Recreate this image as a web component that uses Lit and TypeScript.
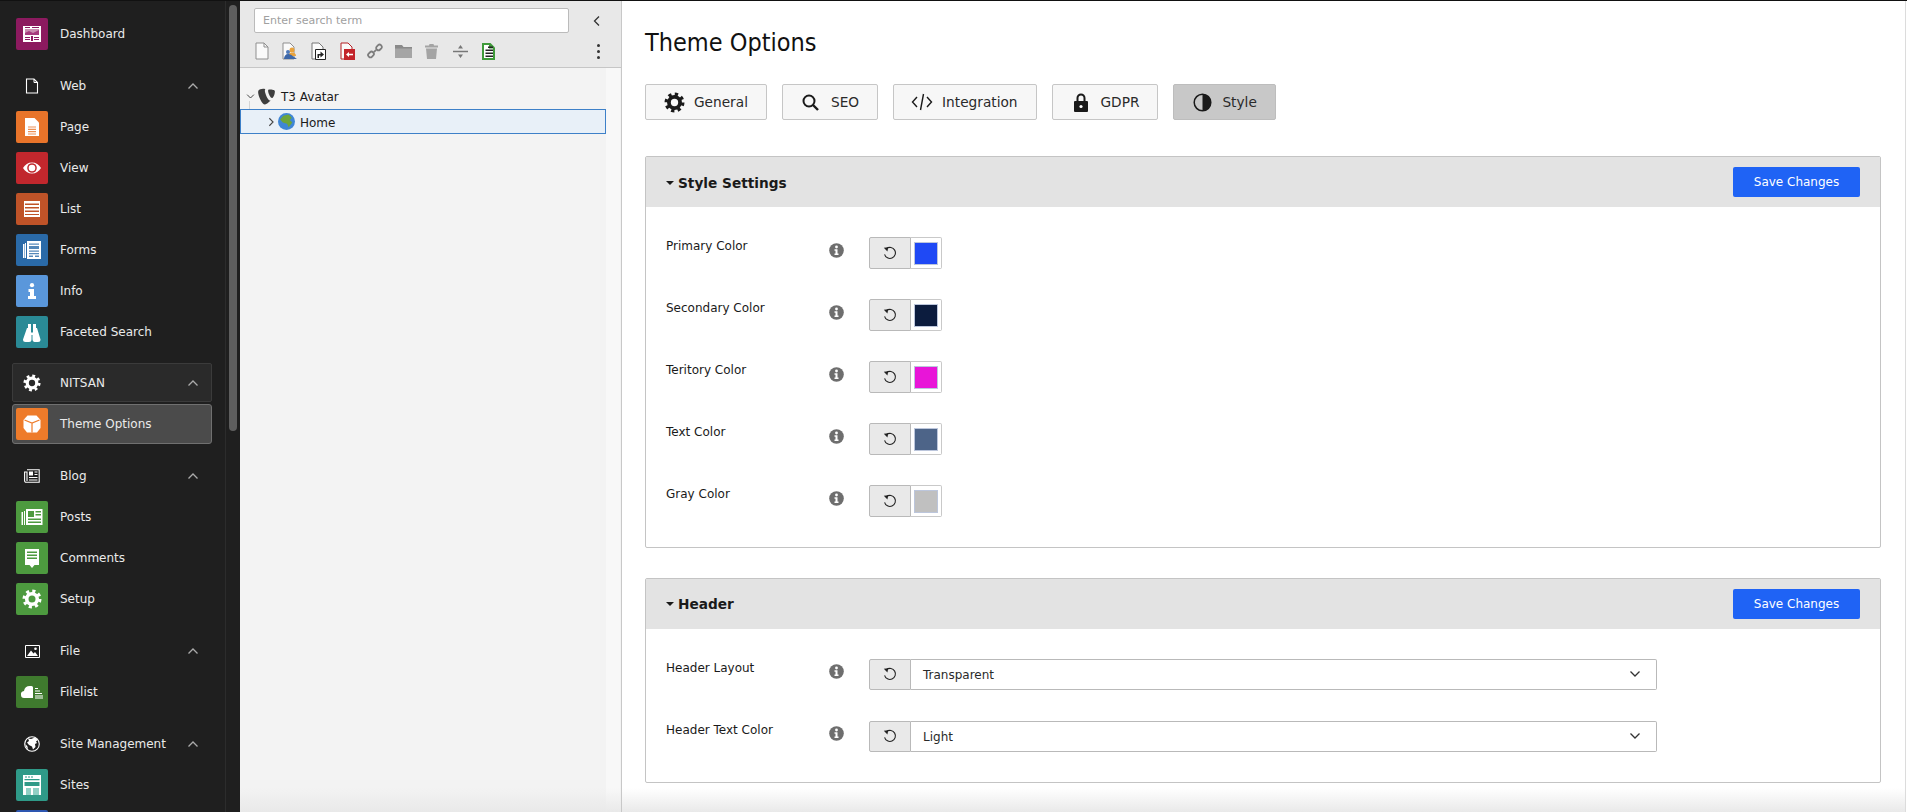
import { LitElement, html, css } from "lit";
import { customElement } from "lit/decorators.js";

const W = "#fff";
const gear = (s: number, c = W, hole = "none") => html`<svg width=${s} height=${s} viewBox="0 0 20 20"><circle cx="10" cy="10" r="5.3" fill=${hole} stroke=${c} stroke-width="3.6"/><circle cx="10" cy="10" r="7.8" fill="none" stroke=${c} stroke-width="3.4" stroke-dasharray="3.06 3.07"/></svg>`;
const chev = (d: string, s = 12, c = "#aaa") => html`<svg width=${s} height=${s} viewBox="0 0 12 12"><path d=${d} fill="none" stroke=${c} stroke-width="1.3"/></svg>`;
const UP = "M1.5 8.5 6 4l4.5 4.5";
const DOWN = "M1.5 3.5 6 8l4.5-4.5";

const icons: Record<string, unknown> = {
  dashboard: html`<svg width="20" height="20" viewBox="0 0 20 20"><path fill="#fff" d="M1 2h18v16H1z"/><path fill="#c98db0" d="M3 5h14v6H3z"/><path fill="#8d1a63" d="M3 3h5v1H3zM10 3h7v1h-7zM9 12h2v5H9z"/><path fill="#a63a7e" d="M3 9l4-2 4 2 6-3v5H3z"/><path fill="#8d1a63" d="M3 13h5v1H3zM3 15h5v1H3zM12 13h5v1h-5zM12 15h5v1h-5z"/></svg>`,
  page: html`<svg width="20" height="20" viewBox="0 0 20 20"><path fill="#fff" d="M3 1h9.500L17 5.500V19H3z"/><path fill="#e8742a" d="M6 9.500h8v1.100H6zM6 11.800h8v1.100H6zM6 14.100h8v1.100H6zM6 16.400h8v1.100H6z" opacity=".8"/></svg>`,
  view: html`<svg width="20" height="20" viewBox="0 0 20 20"><path fill="#fff" d="M1 10c2-3.500 5.200-5.500 9-5.500s7 2 9 5.500c-2 3.500-5.200 5.500-9 5.500S3 13.500 1 10z"/><circle cx="10" cy="10" r="4.800" fill="#c1272d"/><circle cx="10" cy="10" r="3.300" fill="#fff"/></svg>`,
  list: html`<svg width="20" height="20" viewBox="0 0 20 20"><path fill="#fff" d="M2 2h16v2.400H2zM2 6h16v2H2zM2 9.500h16v2H2zM2 13h16v2H2zM2 16h16v2H2z"/><path fill="#fff" d="M2 2h1v16H2zM17 2h1v16h-1z"/></svg>`,
  forms: html`<svg width="20" height="20" viewBox="0 0 20 20"><path fill="#fff" d="M1 4h1.500v14H1zM3 3h1v15H3zM5 1h14v18H5z"/><path fill="#2a6aa8" d="M7 3.500h10v1.200H7zM7 6h10v3H7zM7 10.500h10v1.200H7zM7 13h10v1.200H7zM7 15.500h4v1.500H7zM13 15.500h4v1.500h-4z" opacity=".8"/></svg>`,
  info: html`<svg width="8" height="16" viewBox="0 0 8 16"><circle cx="4" cy="2.200" r="2.100" fill="#fff"/><path fill="#fff" d="M.5 6H6v7h2v3H0v-3h2V9H.5z"/></svg>`,
  search: html`<svg width="22" height="22" viewBox="0 0 22 22"><path fill="#fff" d="M7 3h3v4H7zM12 3h3v4h-3z"/><path fill="#fff" d="M6 7h4v4.500h2V7h4l3.500 11.500a2.500 2.500 0 0 1-2.500 2.500h-3.500A2.500 2.500 0 0 1 11.500 18.500V14h-1v4.500A2.500 2.500 0 0 1 8 21H4.500A2.500 2.500 0 0 1 2 18.500z"/></svg>`,
  theme: html`<svg width="20" height="20" viewBox="0 0 20 20"><path fill="#fff" d="M5.500 1.500h9L18.500 6v8l-3.500 4.500H5L1.500 14V6z"/><path fill="none" stroke="#ee7b2a" stroke-width="1.200" d="M2.500 6 10 9l7.500-3M10 9v9.500"/></svg>`,
  posts: html`<svg width="22" height="22" viewBox="0 0 22 22"><path fill="#fff" d="M0.500 6H2v13H0.500zM3 5h1v14H3zM5 3h16.500v16H5z"/><path fill="#4d9a3f" d="M7 5h6v6H7zM14.500 5H20v1.500h-5.500zM14.500 8H20v1.500h-5.500zM7 12.500h13V14H7zM7 15.500h13V17H7z"/></svg>`,
  comments: html`<svg width="20" height="22" viewBox="0 0 20 22"><path fill="#fff" d="M3 2h14v16h-4.500L10 21l-2.500-3H3z"/><path fill="#4d9a3f" d="M5 4.500h10V6H5zM5 7.500h10V9H5zM5 10.500h10V12H5z"/></svg>`,
  setup: gear(20, W),
  filelist: html`<svg width="24" height="20" viewBox="0 0 24 20"><path fill="#fff" d="M1 13a3.500 3.500 0 0 1 3-4 6 6 0 0 1 6-5h1.500a1.500 1.500 0 0 1 1.500 1.500V16H4a3 3 0 0 1-3-3z"/><path fill="#fff" d="M15 6h3v1h-3zM15 8.500h5v1h-5zM15 11h7v1h-7zM15 13.500h8v1h-8zM15 15.500h8v1h-8z"/></svg>`,
  sites: html`<svg width="20" height="22" viewBox="0 0 20 22"><path fill="#fff" d="M1 1h18v20H1z"/><path fill="#2f9a88" d="M2.500 5H17.500v1.300H2.500zM2.500 8H17.500v4H2.500zM4 14h5v7H4zM11 14h6v7h-6z"/><path fill="#8fd0c5" d="M4 14h5v7H4zM11 14h6v7h-6z"/><path fill="#2f9a88" d="M3 2.500h2v1H3zM6 2.500h2v1H6zM9 2.500h2v1H9z"/></svg>`,
  next: html`<svg width="20" height="20" viewBox="0 0 20 20"></svg>`,
};

const headIcons: Record<string, unknown> = {
  web: html`<svg width="14" height="16" viewBox="0 0 14 16"><path fill="none" stroke="#fff" stroke-width="1.100" d="M1.500 1h7.500l3.500 3.500v10.500h-11z"/><path fill="none" stroke="#fff" stroke-width="1" d="M9 1v3.500h3.500"/></svg>`,
  gear: gear(18, W),
  blog: html`<svg width="16" height="16" viewBox="0 0 16 14"><path fill="none" stroke="#fff" stroke-width="1.100" d="M3 .8h12.200v12.400H2a1.400 1.400 0 0 1-1.400-1.400V3H3v9"/><path fill="#fff" d="M5 2.500h4v4H5zM10.500 2.500h3v1h-3zM10.500 5h3v1h-3zM5 8h8.500v1H5zM5 10.500h8.500v1H5z"/></svg>`,
  file: html`<svg width="15" height="13" viewBox="0 0 15 13"><path fill="none" stroke="#fff" stroke-width="1" d="M.5.500h14v12H.5z"/><circle cx="10.500" cy="3.800" r="1.300" fill="#fff"/><path fill="#fff" d="M2 11l4-5.500 2.500 3 1.500-1.500 3 4z"/></svg>`,
  globe: html`<svg width="16" height="16" viewBox="0 0 16 16"><circle cx="8" cy="8" r="7.300" fill="none" stroke="#fff" stroke-width="1.100"/><path fill="#fff" d="M4 2.200l3 .8 4-1.500 2.700 2.500-1.700 1.500 1 1.500-2 1 .5 3-2.500 2.500-1-3-3-1.500L3 6.500l2-1.500zM1.500 8l2 2.500.5 3L2 11z"/></svg>`,
};

type Item = { k: string; label: string; bg: string; active?: boolean };
type Group = { icon?: string; title?: string; box?: boolean; items: Item[] };

const groups: Group[] = [
  { items: [{ k: "dashboard", label: "Dashboard", bg: "#8c1a5f" }] },
  { icon: "web", title: "Web", items: [
    { k: "page", label: "Page", bg: "#e8742a" },
    { k: "view", label: "View", bg: "#c1272d" },
    { k: "list", label: "List", bg: "#bf5328" },
    { k: "forms", label: "Forms", bg: "#2a6aa8" },
    { k: "info", label: "Info", bg: "#5a97db" },
    { k: "search", label: "Faceted Search", bg: "#2a8a96" },
  ]},
  { icon: "gear", title: "NITSAN", box: true, items: [{ k: "theme", label: "Theme Options", bg: "#ee7b2a", active: true }] },
  { icon: "blog", title: "Blog", items: [
    { k: "posts", label: "Posts", bg: "#4d9a3f" },
    { k: "comments", label: "Comments", bg: "#4d9a3f" },
    { k: "setup", label: "Setup", bg: "#4d9a3f" },
  ]},
  { icon: "file", title: "File", items: [{ k: "filelist", label: "Filelist", bg: "#3f7a2e" }] },
  { icon: "globe", title: "Site Management", items: [
    { k: "sites", label: "Sites", bg: "#2f9a88" },
    { k: "next", label: "", bg: "#2d56b0" },
  ]},
];

const toolbar = [
  html`<svg width="14" height="18" viewBox="0 0 14 18"><path fill="#fafafa" stroke="#8f8f8f" d="M1 1h8l4 4v12H1z"/><path fill="none" stroke="#8f8f8f" d="M9 1v4h4"/></svg>`,
  html`<svg width="16" height="18" viewBox="0 0 16 18"><path fill="#fafafa" stroke="#8f8f8f" d="M1 1h7l4 4v12H1z"/><circle cx="10" cy="8" r="2.500" fill="#e9a23b"/><path fill="#e9a23b" d="M6 14c0-2 1.500-3.500 4-3.500s4 1.500 4 3.500z"/><circle cx="6" cy="10" r="2" fill="#4d78b8"/><path fill="#3d67a8" d="M2 17c0-3 1.800-5 4-5 1 0 3 .5 4 1.500l5 3.500z"/></svg>`,
  html`<svg width="15" height="18" viewBox="0 0 15 18"><path fill="#fafafa" stroke="#777" d="M1 1h7l4 4v12H1z"/><path fill="#fff" stroke="#222" d="M4.500 7.500h10v10h-10z"/><path fill="#222" d="M6.500 12h3V9.500l3.500 3-3.500 3V13.500H8V16H6.500z"/></svg>`,
  html`<svg width="15" height="18" viewBox="0 0 15 18"><path fill="#fafafa" stroke="#b52025" d="M1 1h7l4 4v12H1z"/><path fill="#c3232a" d="M4 7h11v11H4z"/><path fill="#fff" d="M6 12.500l3-2.500v1.700h4v1.600H9V15z"/></svg>`,
  html`<svg width="16" height="16" viewBox="0 0 16 16"><g fill="none" stroke="#7d7d7d" stroke-width="1.800"><path d="M6.800 9.200 9.200 6.800"/><rect x="8.300" y="1.500" width="6" height="4.500" rx="2" transform="rotate(-45 11.300 3.750) translate(0 1)"/><rect x="1.700" y="10" width="6" height="4.500" rx="2" transform="rotate(-45 4.700 12.250) translate(0 -1)"/></g></svg>`,
  html`<svg width="17" height="13" viewBox="0 0 17 13"><path fill="#8a8a8a" d="M0 0h7l1.500 2H17v11H0z"/><path fill="#a5a5a5" d="M0 3.500h17V13H0z"/></svg>`,
  html`<svg width="13" height="15" viewBox="0 0 13 15"><path fill="#a4a4a4" d="M4.500 0h4l.5 1.500h4V3.500H0V1.500h4zM1 4.500h11L11 15H2z"/></svg>`,
  html`<svg width="15" height="13" viewBox="0 0 15 13"><path fill="#777" d="M0 5.800h15v1.400H0zM7.500 0 10 3.500H5zM7.500 13 5 9.500h5z"/></svg>`,
  html`<svg width="13" height="17" viewBox="0 0 13 17"><path fill="#3f9a3a" d="M0 0h8.500L13 4.500V17H0z"/><path fill="#fff" d="M2 2h5v3.500h4V15H2z"/><path fill="#222" d="M6 3.500h5V5H6zM3.500 6.500H11V8H3.500zM3.500 9.500H11V11H3.500zM3.500 12.500H11V14H3.500z"/></svg>`,
];

const tabIcons: Record<string, unknown> = {
  General: gear(21, "#1a1a1a"),
  SEO: html`<svg width="17" height="17" viewBox="0 0 17 17"><circle cx="7" cy="7" r="5.500" fill="none" stroke="#1a1a1a" stroke-width="2"/><path d="M11 11l5 5" stroke="#1a1a1a" stroke-width="2.400"/></svg>`,
  Integration: html`<svg width="22" height="18" viewBox="0 0 22 18"><path fill="none" stroke="#1a1a1a" stroke-width="1.400" d="M6 4 1.500 9 6 14M16 4l4.500 5L16 14M12.500 1 9.500 17"/></svg>`,
  GDPR: html`<svg width="16" height="19" viewBox="0 0 16 19"><path fill="none" stroke="#1a1a1a" stroke-width="2" d="M4.500 8V5a3.500 3.500 0 0 1 7 0v3"/><path fill="#1a1a1a" d="M2 8h12a1 1 0 0 1 1 1v9a1 1 0 0 1-1 1H2a1 1 0 0 1-1-1V9a1 1 0 0 1 1-1z"/><circle cx="8" cy="13.500" r="1.600" fill="#fff"/></svg>`,
  Style: html`<svg width="19" height="19" viewBox="0 0 19 19"><circle cx="9.500" cy="9.500" r="8.300" fill="none" stroke="#1a1a1a" stroke-width="1.500"/><path fill="#1a1a1a" d="M9.500 1.200a8.300 8.300 0 0 1 0 16.600z"/></svg>`,
};

const reset = html`<svg width="14" height="14" viewBox="0 0 14 14"><path fill="none" stroke="#222" stroke-width="1.100" d="M3.500 2.600A5.500 5.500 0 1 1 1.600 8.300"/><path fill="#222" d="M0.800 1.800 5.300 1.200 4.400 5.600z"/></svg>`;
const infoBadge = html`<svg width="15" height="15" viewBox="0 0 15 15"><circle cx="7.500" cy="7.500" r="7.300" fill="#6e6e6e"/><circle cx="7.500" cy="4" r="1.400" fill="#fff"/><path fill="#fff" d="M5.500 6.300h3v4.200h1V12H5.500v-1.500h1V7.800h-1z"/></svg>`;

@customElement("app-root")
export class AppRoot extends LitElement {
  static styles = css`
    :host { display: flex; width: 100%; height: 812px; overflow: hidden; box-sizing: border-box; border-top: 1px solid #111; font-family: "DejaVu Sans", Verdana, sans-serif; font-size: 12px; color: #1a1a1a; background: #fff; }
    * { box-sizing: border-box; }
    .side { flex: 0 0 240px; background: #1f1f1f; position: relative; overflow: hidden; padding: 17px 0 0 12px; }
    .rule { position: absolute; top: 0; bottom: 0; left: 225px; width: 1px; background: #2c2c2c; }
    .thumb { position: absolute; top: 4px; left: 229px; width: 8px; height: 426px; border-radius: 4px; background: #5e5e5e; }
    .group { width: 200px; margin-bottom: 15px; }
    .head { height: 40px; display: flex; align-items: center; margin-bottom: 6px; padding: 2px 12px 0 3px; color: #eaeaea; border: 1px solid transparent; border-radius: 2px; }
    .head.box { background: #2a2a2a; border-color: #3b3b3b; margin-top: 1px; height: 39px; padding-top: 1px; }
    .slot { width: 32px; display: flex; justify-content: center; align-items: center; margin-right: 12px; flex: none; }
    .head .t { flex: 1; }
    .item { height: 32px; display: flex; align-items: center; padding: 0 4px; color: #eaeaea; margin-bottom: 9px; }
    .item:last-child { margin-bottom: 0; }
    .item.active { height: 40px; margin: -4px 0; padding: 0 3px; background: #4b4b4b; border: 1px solid #707070; border-radius: 3px; }
    .tile { width: 32px; height: 32px; border-radius: 2px; display: flex; align-items: center; justify-content: center; margin-right: 12px; flex: none; }
    .tree { flex: 0 0 381px; background: #f3f3f3; border-right: 1px solid #c8c8c8; position: relative; }
    .tools { height: 67px; background: #e8e8e8; border-bottom: 1px solid #c6c6c6; padding: 7px 0 0 14px; }
    .srow { display: flex; align-items: center; height: 25px; }
    .srow input { width: 315px; height: 25px; border: 1px solid #bbb; border-radius: 2px; padding: 0 8px; background: #fff; font: 11px "DejaVu Sans", sans-serif; color: #333; outline: none; }
    .srow input::placeholder { color: #a0a0a0; opacity: 1; }
    .srow .back { margin-left: 22px; display: flex; }
    .ticons { display: flex; align-items: center; margin-top: 8px; height: 20px; width: 351px; }
    .ticons span { width: 28.300px; display: flex; justify-content: center; flex: none; }
    .ticons span:first-child { margin-left: -6px; }
    .ticons .dots { margin-left: auto; width: 4px; display: flex; flex-direction: column; gap: 3px; align-items: center; margin-right: 5px; }
    .dots i { width: 3px; height: 3px; background: #333; border-radius: 50%; display: block; }
    .nodes { padding: 16px 15px 0 0; height: 100%; position: relative; }
    .track { position: absolute; top: 67px; bottom: 0; left: 366px; width: 14px; background: #f8f8f8; }
    .node { height: 25px; display: flex; align-items: center; }
    .node.root { padding-left: 6px; }
    .node.home { padding-left: 25px; background: #e8f0f8; border: 1px solid #3d80c8; width: 366px; }
    .node svg { flex: none; }
    .tlogo { margin-left: 1px; }
    .tglobe { margin-left: 2px; }
    .tl1 { margin-left: 4px; padding-top: 1px; }
    .tl2 { margin-left: 5px; padding-top: 2px; }
    .tline { position: absolute; left: 9px; top: 100px; width: 19px; height: 23px; border-left: 1px solid #d4d4d4; border-bottom: 1px solid #d4d4d4; }
    .main { flex: 1; margin-right: 1px; border-right: 1px solid #dcdcdc; padding: 0 24px 0 23px; position: relative; overflow: hidden; background: #fff; }
    h1 { margin: 0; padding-top: 26px; height: 83px; font: 400 25px/32px "DejaVu Sans Condensed", "DejaVu Sans", sans-serif; color: #111; }
    .tabs { display: flex; gap: 15px; margin-bottom: 36px; }
    .tab { height: 36px; padding: 0 18px; display: flex; align-items: center; gap: 10px; background: #f7f7f7; border: 1px solid #c6c6c6; border-radius: 2px; font-size: 13.700px; color: #2a2a2a; }
    .tab.on { background: #c8c8c8; border-color: #bdbdbd; }
    .ticon { flex: 0 0 20px; width: 20px; display: flex; justify-content: center; }
    .ticon svg { flex: none; }
    .panel { border: 1px solid #c4c4c4; border-radius: 2px; margin-bottom: 30px; }
    .phead { height: 50px; background: #e3e3e3; display: flex; align-items: center; justify-content: space-between; padding: 0 20px; }
    .ptitle { display: flex; align-items: center; font-weight: 700; font-size: 13.700px; gap: 4px; color: #1a1a1a; padding-top: 1px; }
    .caret { width: 0; height: 0; border: 4px solid transparent; border-top: 4px solid #1a1a1a; border-bottom: 0; }
    .save { width: 127px; height: 30px; background: #1f63f5; color: #fff; border: 0; border-radius: 2px; font: 12px "DejaVu Sans", sans-serif; }
    .pbody { padding: 30px 20px; display: flex; flex-direction: column; gap: 30.500px; }
    .row { display: grid; grid-template-columns: 163px 40px auto; height: 31.500px; }
    .row label { font-size: 12px; padding-top: 2px; line-height: 15px; }
    .badge { display: flex; height: 26px; align-items: center; }
    .ctrl { display: flex; height: 31.500px; }
    .rbtn { width: 42px; height: 100%; background: #e9e9e9; border: 1px solid #b9b9b9; border-radius: 2px 0 0 2px; display: flex; align-items: center; justify-content: center; }
    .swatch { width: 31px; height: 100%; border: 1px solid #c9c9c9; border-left: 0; border-radius: 0 2px 2px 0; background: #fff; padding: 4px 3px 3px 3px; }
    .swatch div { width: 100%; height: 100%; border: 1px solid #bcc6dc; }
    .select { width: 746px; height: 100%; border: 1px solid #b9b9b9; border-left: 0; border-radius: 0 2px 2px 0; display: flex; align-items: center; justify-content: space-between; padding: 0 15px 0 12px; background: #fff; font-size: 12px; color: #2a2a2a; }
    .select span { padding-top: 2px; }
    .shade { position: absolute; left: 0; right: 0; bottom: 0; height: 24px; background: linear-gradient(#fff0, #e9e9e9); pointer-events: none; }
  `;

  private group(g: Group) {
    return html`<div class="group">
      ${g.title ? html`<div class="head ${g.box ? "box" : ""}"><span class="slot">${headIcons[g.icon!]}</span><span class="t">${g.title}</span>${chev(UP)}</div>` : ""}
      ${g.items.map(i => html`<div class="item ${i.active ? "active" : ""}"><span class="tile" style="background:${i.bg}">${icons[i.k]}</span><span>${i.label}</span></div>`)}
    </div>`;
  }

  private field(label: string, ctrl: unknown) {
    return html`<div class="row"><label>${label}</label><span class="badge">${infoBadge}</span><div class="ctrl"><div class="rbtn">${reset}</div>${ctrl}</div></div>`;
  }

  render() {
    const colors = [["Primary Color", "#1f49f5"], ["Secondary Color", "#0c1c3e"], ["Teritory Color", "#e815d8"], ["Text Color", "#4d6488"], ["Gray Color", "#c0c0c0"]];
    return html`
      <aside class="side">
        <div class="rule"></div><div class="thumb"></div>
        ${groups.map(g => this.group(g))}
      </aside>
      <section class="tree">
        <div class="track"></div>
        <div class="tools">
          <div class="srow"><input placeholder="Enter search term" /><span class="back">${chev("M8 1.500 3.500 6 8 10.500", 12, "#333")}</span></div>
          <div class="ticons">${toolbar.map(t => html`<span>${t}</span>`)}<div class="dots"><i></i><i></i><i></i></div></div>
        </div>
        <div class="tline"></div>
        <div class="nodes">
          <div class="node root">${chev(DOWN, 9, "#444")}
            <svg class="tlogo" width="21" height="20" viewBox="0 0 16 16"><path fill="#3e3e3e" d="M11.500 10.800c-.2.1-.4.1-.6.1-1.700 0-4.200-5.900-4.200-7.900 0-.7.2-1 .4-1.200C5 1 2.400 1.800 1.600 2.800c-.2.3-.3.7-.3 1.300C1.300 7.100 4.500 14 6.800 14c1.100 0 2.900-1.800 4.700-3.200z"/><path fill="#3e3e3e" d="M10.400 2c2.100 0 4.300.3 4.300 1.500 0 2.400-1.500 5.300-2.300 5.300-1.400 0-3.100-3.900-3.100-5.800 0-.9.3-1 1.100-1z"/></svg>
            <span class="tl1">T3 Avatar</span></div>
          <div class="node home">${chev("M4 1.500 8.500 6 4 10.500", 10, "#444")}
            <svg class="tglobe" width="17" height="17" viewBox="0 0 16 16"><circle cx="8" cy="8" r="8" fill="#3f86d6"/><path fill="#6da53a" d="M5 2.500l5-1 3 3-2 2 2.500 2.500-3.500 4.500-1.500-3.500L4.500 9 2 6z"/></svg>
            <span class="tl2">Home</span></div>
        </div>
        <div class="shade"></div>
      </section>
      <main class="main">
        <h1>Theme Options</h1>
        <div class="tabs">
          ${["General", "SEO", "Integration", "GDPR", "Style"].map(t => html`<div class="tab ${t === "Style" ? "on" : ""}"><span class="ticon">${tabIcons[t]}</span><span>${t}</span></div>`)}
        </div>
        <div class="panel">
          <div class="phead"><div class="ptitle"><span class="caret"></span>Style Settings</div><button class="save">Save Changes</button></div>
          <div class="pbody">
            ${colors.map(([l, c]) => this.field(l, html`<div class="swatch"><div style="background:${c}"></div></div>`))}
          </div>
        </div>
        <div class="panel">
          <div class="phead"><div class="ptitle"><span class="caret"></span>Header</div><button class="save">Save Changes</button></div>
          <div class="pbody">
            ${[["Header Layout", "Transparent"], ["Header Text Color", "Light"]].map(([l, v]) => this.field(l, html`<div class="select"><span>${v}</span>${chev(DOWN, 12, "#333")}</div>`))}
          </div>
        </div>
        <div class="shade"></div>
      </main>
    `;
  }
}
